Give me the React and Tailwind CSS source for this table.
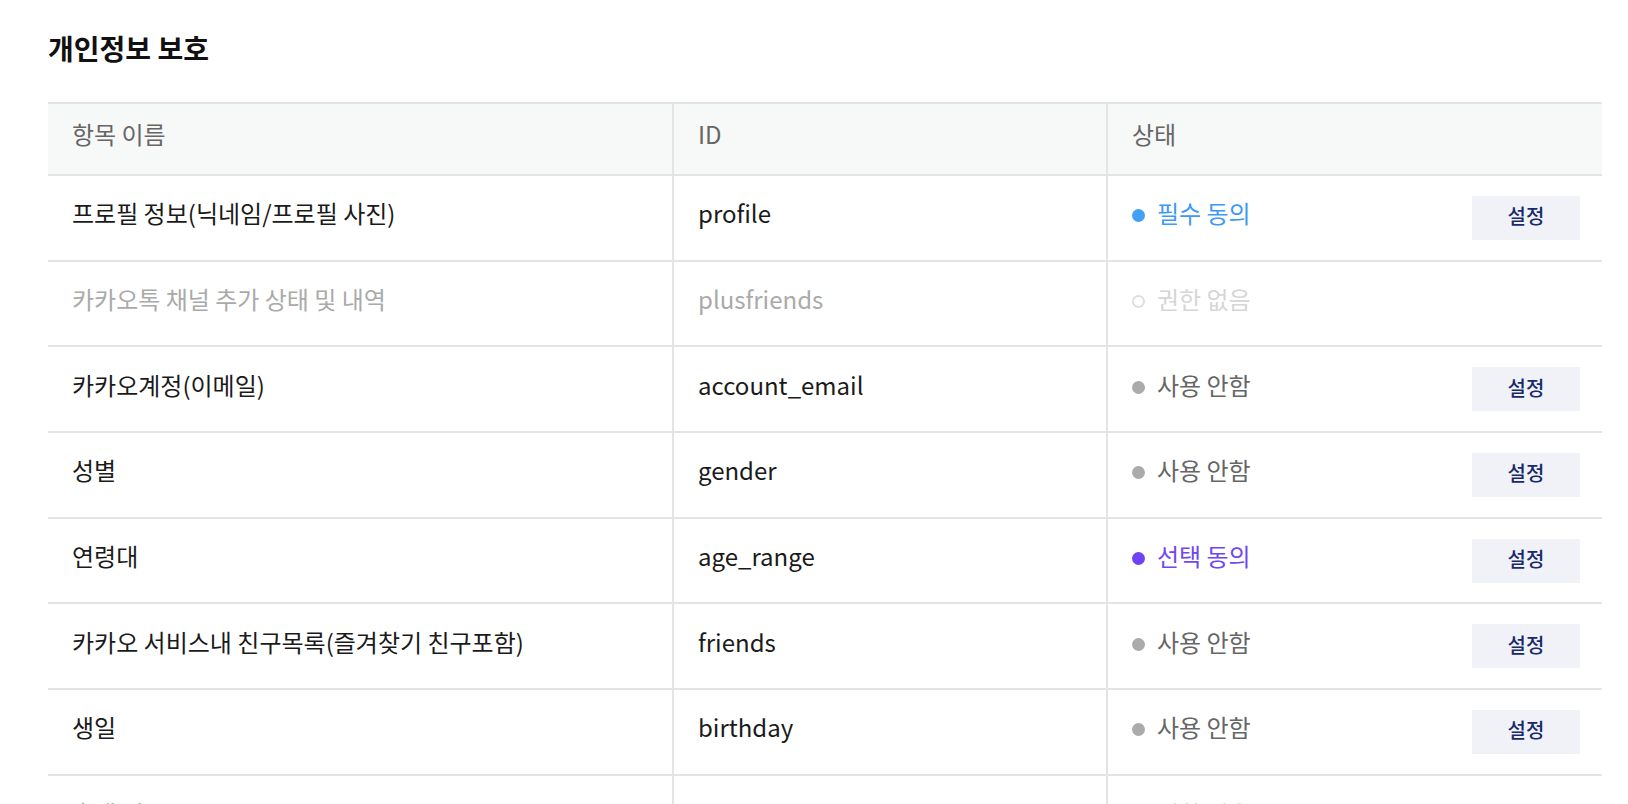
import React from "react";

const rows = [
  { name: "프로필 정보(닉네임/프로필 사진)", id: "profile", status: "required" },
  { name: "카카오톡 채널 추가 상태 및 내역", id: "plusfriends", status: "none", disabled: true },
  { name: "카카오계정(이메일)", id: "account_email", status: "off" },
  { name: "성별", id: "gender", status: "off" },
  { name: "연령대", id: "age_range", status: "optional" },
  { name: "카카오 서비스내 친구목록(즐겨찾기 친구포함)", id: "friends", status: "off" },
  { name: "생일", id: "birthday", status: "off" },
  { name: "출생 연도", id: "birthyear", status: "none", disabled: true },
];

function Status({ status }) {
  if (status === "required")
    return (
      <div className="flex items-center gap-3">
        <span className="w-[13px] h-[13px] rounded-full bg-[#42a0f6] mb-[4px]" />
        <span className="text-[#3d9af4] pb-[9px]">필수 동의</span>
      </div>
    );
  if (status === "optional")
    return (
      <div className="flex items-center gap-3">
        <span className="w-[13px] h-[13px] rounded-full bg-[#6f42f5] mb-[4px]" />
        <span className="text-[#7046f4] pb-[9px]">선택 동의</span>
      </div>
    );
  if (status === "none")
    return (
      <div className="flex items-center gap-3">
        <span className="w-[13px] h-[13px] rounded-full border-2 border-[#dedede] mb-[4px]" />
        <span className="text-[#d6d6d6] pb-[9px]">권한 없음</span>
      </div>
    );
  return (
    <div className="flex items-center gap-3">
      <span className="w-[13px] h-[13px] rounded-full bg-[#ababab] mb-[4px]" />
      <span className="text-[#666666] pb-[9px]">사용 안함</span>
    </div>
  );
}

export default function App() {
  return (
    <div
      className="bg-white h-[804px] overflow-hidden pl-12 pt-[28px]"
      style={{ fontFamily: '"Noto Sans CJK KR", "Noto Sans", sans-serif' }}
    >
      <h1 className="text-[28px] leading-[40px] font-bold text-[#111111]">개인정보 보호</h1>
      <div className="mt-[34px] w-[1554px] text-[24px]">
        <div className="grid grid-cols-[624px_434px_496px] h-[74px] bg-[#f7f8f8] border-y-2 border-[#e4e4e4] text-[#666666]">
          <div className="flex items-center pl-6 pb-[10px]">항목 이름</div>
          <div className="flex items-center pl-6 pb-[10px] border-l-2 border-[#e4e4e4]">ID</div>
          <div className="flex items-center pl-6 pb-[10px] border-l-2 border-[#e4e4e4]">상태</div>
        </div>
        {rows.map((r) => (
          <div
            key={r.id}
            className="grid grid-cols-[624px_434px_496px] h-[85.7px] border-b-2 border-[#e4e4e4]"
          >
            <div
              className={
                "flex items-center pl-6 pb-[9px] " + (r.disabled ? "text-[#aaaaaa]" : "text-[#1a1a1a]")
              }
            >
              {r.name}
            </div>
            <div
              className={
                "flex items-center pl-6 pb-[9px] border-l-2 border-[#e4e4e4] " +
                (r.disabled ? "text-[#aaaaaa]" : "text-[#1a1a1a]")
              }
            >
              {r.id}
            </div>
            <div className="flex items-center justify-between pl-6 pr-[22px] border-l-2 border-[#e4e4e4]">
              <Status status={r.status} />
              {r.status !== "none" && (
                <button className="w-[108px] h-[44px] bg-[#f0f2f8] text-[#182a6a] text-[20px] font-medium leading-none pb-[3px]">
                  설정
                </button>
              )}
            </div>
          </div>
        ))}
      </div>
    </div>
  );
}
